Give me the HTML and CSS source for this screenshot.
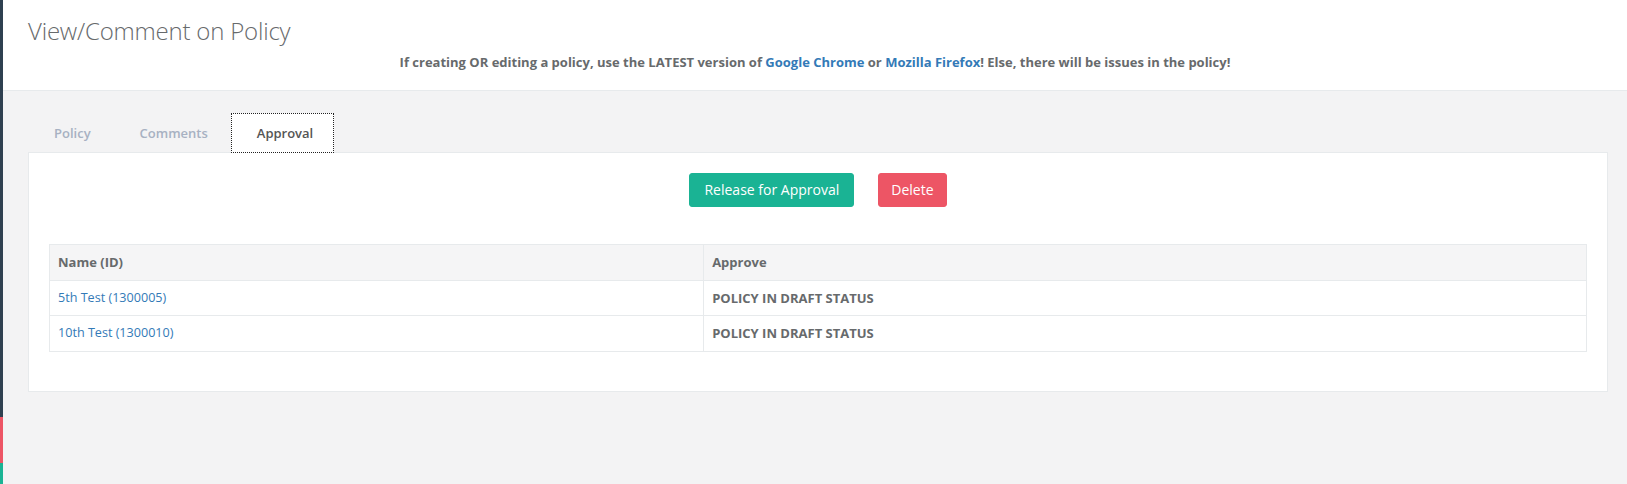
FILE: index.html
```html
<!DOCTYPE html>
<html lang="en">
<head>
<meta charset="utf-8">
<title>View/Comment on Policy</title>
<link rel="stylesheet" href="styles.css">
</head>
<body>
<div class="layout">
  <div class="side-strip">
    <div class="strip-dark"></div>
    <div class="strip-red"></div>
    <div class="strip-teal"></div>
  </div>
  <div class="main">
    <div class="page-heading">
      <h2 class="page-title">View/Comment on Policy</h2>
      <p class="browser-note">If creating OR editing a policy, use the LATEST version of <a href="#">Google Chrome</a> or <a href="#">Mozilla Firefox</a>! Else, there will be issues in the policy!</p>
    </div>
    <div class="content">
      <ul class="tabs">
        <li class="tab"><a href="#">Policy</a></li>
        <li class="tab"><a href="#">Comments</a></li>
        <li class="tab active"><a href="#">Approval</a></li>
      </ul>
      <div class="panel">
        <div class="actions">
          <button class="btn btn-primary" type="button">Release for Approval</button>
          <button class="btn btn-danger" type="button">Delete</button>
        </div>
        <table class="approval-table">
          <thead>
            <tr><th class="col-name">Name (ID)</th><th>Approve</th></tr>
          </thead>
          <tbody>
            <tr><td class="name-cell"><a href="#">5th Test (1300005)</a></td><td class="status">POLICY IN DRAFT STATUS</td></tr>
            <tr><td class="name-cell"><a href="#">10th Test (1300010)</a></td><td class="status">POLICY IN DRAFT STATUS</td></tr>
          </tbody>
        </table>
      </div>
    </div>
  </div>
</div>
</body>
</html>
```

FILE: styles.css
```css
* { box-sizing: border-box; }
html, body { margin: 0; padding: 0; height: 100%; }
body {
  font-family: "Open Sans", "Helvetica Neue", Arial, sans-serif;
  font-size: 13px;
  color: #676a6c;
  background: #f3f3f4;
}
a { color: #337ab7; text-decoration: none; }

.layout { display: flex; min-height: 484px; }

.side-strip { width: 3px; display: flex; flex-direction: column; flex: none; }
.strip-dark { height: 417px; background: #2f4050; }
.strip-red { height: 46px; background: #ed5565; }
.strip-teal { flex: 1; background: #1ab394; }

.main { flex: 1; background: #f3f3f4; }

.page-heading {
  background: #fff;
  border-bottom: 1px solid #e7eaec;
  height: 91px;
  padding: 18px 25px 0 25px;
}
.page-title {
  margin: 0;
  font-size: 24px;
  font-weight: 300;
  line-height: 26px;
  letter-spacing: -0.2px;
  color: #676a6c;
}
.browser-note {
  margin: 9px 0 0 0;
  text-align: center;
  font-size: 13px;
  font-weight: 700;
  line-height: 19px;
}
.browser-note a { font-weight: 700; }

.content { padding: 22px 19px 0 25px; }

.tabs {
  list-style: none;
  margin: 0 0 -1px 0;
  padding: 0;
  display: flex;
}
.tab { margin-right: 2px; }
.tab a {
  display: block;
  padding: 10px 20px 10px 25px;
  line-height: 18px;
  border: 1px solid transparent;
  color: #a7b1c2;
  font-weight: 600;
}
.tab.active a {
  background: #fff;
  color: #555;
  border: 1px dotted #222;
}

.panel {
  background: #fff;
  border: 1px solid #e7eaec;
  padding: 20px;
}
.actions {
  display: flex;
  justify-content: center;
  gap: 24px;
  margin-bottom: 37px;
}
.btn {
  font-family: inherit;
  font-size: 14px;
  line-height: 20px;
  padding: 6px 12px;
  border-radius: 3px;
  border: 1px solid transparent;
  color: #fff;
  cursor: pointer;
}
.btn-primary { background: #1ab394; border-color: #1ab394; padding: 6px 14px; }
.btn-danger { background: #ed5565; border-color: #ed5565; }

.approval-table {
  width: 100%;
  border-collapse: collapse;
  border: 1px solid #e7eaec;
  margin-bottom: 19px;
}
.approval-table th,
.approval-table td {
  border: 1px solid #e7eaec;
  padding: 8px;
  line-height: 18.5px;
  text-align: left;
  vertical-align: top;
}
.approval-table th {
  background: #f5f5f6;
  font-weight: 700;
}
.col-name { width: 42.56%; }
.approval-table td.name-cell { font-size: 12.6px; }
.status { font-weight: 700; }
```
